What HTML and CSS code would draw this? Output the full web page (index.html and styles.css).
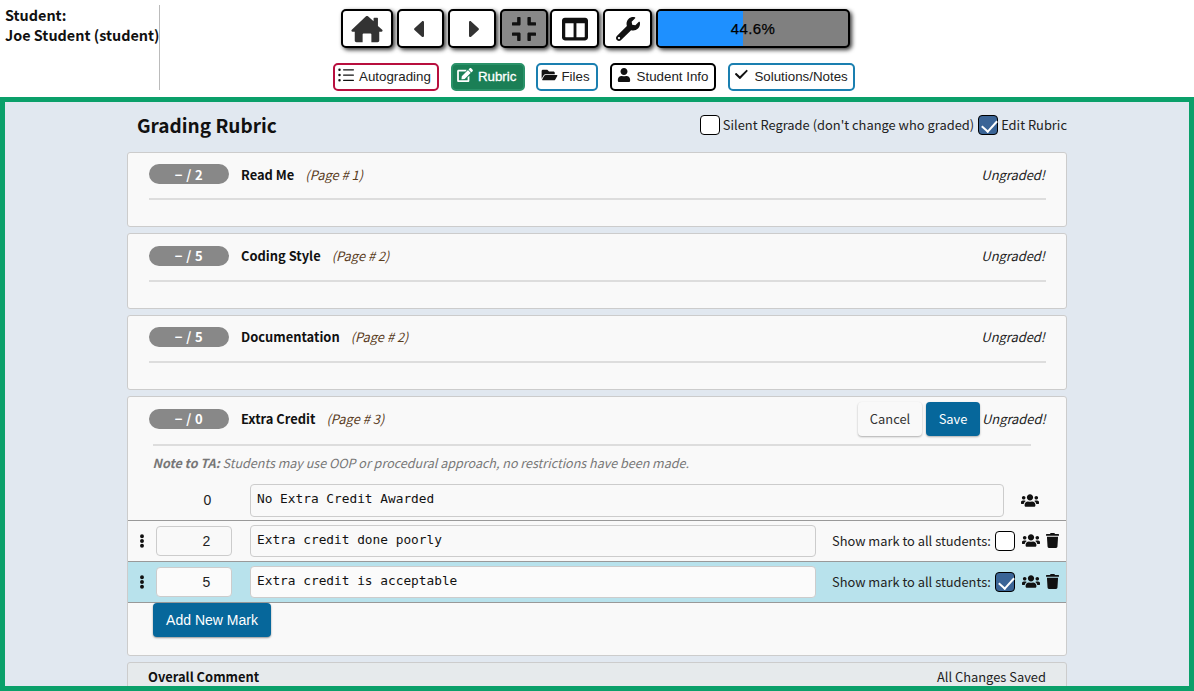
FILE: index.html
```html
<!DOCTYPE html>
<html>
	<head>
		<meta charset="utf-8">
		<title>Grading Rubric</title>
		<link rel="stylesheet" href="styles.css">
	</head>
	<body>
		<svg class="defs" width="0" height="0">
			<symbol id="i-home" viewBox="0 0 576 512"><path d="M288 16c7 0 13 3 18 7l102 90V64c0-7 5-12 12-12h56c7 0 12 5 12 12v138l78 68c14 12 5 34-13 34h-41v164c0 18-14 32-32 32H368V352c0-9-7-16-16-16H224c-9 0-16 7-16 16v148H96c-18 0-32-14-32-32V304H23c-18 0-27-22-13-34L270 23c5-4 11-7 18-7z"/></symbol>
			<symbol id="i-left" viewBox="0 0 160 256"><path d="M160 20v216c0 18-21 26-34 14L8 142c-10-8-10-20 0-28L126 6c13-12 34-4 34 14z"/></symbol>
			<symbol id="i-right" viewBox="0 0 160 256"><path d="M0 236V20C0 2 21-6 34 6l118 108c10 8 10 20 0 28L34 250c-13 12-34 4-34-14z"/></symbol>
			<symbol id="i-compress" viewBox="0 32 448 448"><path d="M436 192H312c-13.3 0-24-10.7-24-24V44c0-6.6 5.4-12 12-12h40c6.6 0 12 5.4 12 12v84h84c6.6 0 12 5.4 12 12v40c0 6.6-5.4 12-12 12zm-276-24V44c0-6.6-5.4-12-12-12h-40c-6.6 0-12 5.4-12 12v84H12c-6.6 0-12 5.4-12 12v40c0 6.6 5.4 12 12 12h124c13.3 0 24-10.7 24-24zm0 300V344c0-13.3-10.7-24-24-24H12c-6.6 0-12 5.4-12 12v40c0 6.6 5.4 12 12 12h84v84c0 6.6 5.4 12 12 12h40c6.6 0 12-5.4 12-12zm192 0v-84h84c6.6 0 12-5.4 12-12v-40c0-6.6-5.4-12-12-12H312c-13.3 0-24 10.7-24 24v124c0 6.6 5.4 12 12 12h40c6.6 0 12-5.4 12-12z"/></symbol>
			<symbol id="i-columns" viewBox="0 0 512 448"><path fill-rule="evenodd" d="M56 0h400c31 0 56 25 56 56v336c0 31-25 56-56 56H56c-31 0-56-25-56-56V56C0 25 25 0 56 0zM64 112v264c0 4 4 8 8 8h156V112zm220 0v272h156c4 0 8-4 8-8V112z"/></symbol>
			<symbol id="i-wrench" viewBox="0 0 512 512"><path d="M507.73 109.1c-2.24-9.03-13.54-12.09-20.12-5.51l-74.36 74.36-67.88-11.31-11.31-67.88 74.36-74.36c6.62-6.62 3.43-17.9-5.66-20.16-47.38-11.74-99.55.91-136.58 37.93-39.64 39.64-50.55 97.1-34.05 147.2L18.74 402.76c-24.99 24.99-24.99 65.51 0 90.5 24.99 24.99 65.51 24.99 90.5 0l213.21-213.21c50.12 16.71 107.47 5.68 147.37-34.22 37.07-37.07 49.7-89.32 37.91-136.73zM64 472c-13.25 0-24-10.75-24-24 0-13.26 10.75-24 24-24s24 10.74 24 24c0 13.25-10.75 24-24 24z"/></symbol>
			<symbol id="i-list" viewBox="0 0 512 448"><path d="M48 16a40 40 0 1 1 0 80 40 40 0 0 1 0-80zm0 168a40 40 0 1 1 0 80 40 40 0 0 1 0-80zm0 168a40 40 0 1 1 0 80 40 40 0 0 1 0-80zM176 36h320c9 0 16 7 16 16v8c0 9-7 16-16 16H176c-9 0-16-7-16-16v-8c0-9 7-16 16-16zm0 168h320c9 0 16 7 16 16v8c0 9-7 16-16 16H176c-9 0-16-7-16-16v-8c0-9 7-16 16-16zm0 168h320c9 0 16 7 16 16v8c0 9-7 16-16 16H176c-9 0-16-7-16-16v-8c0-9 7-16 16-16z"/></symbol>
			<symbol id="i-edit" viewBox="0 0 576 512"><path d="M402.6 83.2l90.2 90.2c3.8 3.8 3.8 10 0 13.8L274.4 405.6l-92.8 10.3c-12.4 1.4-22.9-9.1-21.5-21.5l10.3-92.8L388.8 83.2c3.8-3.8 10-3.8 13.8 0zm162-22.9l-48.8-48.8c-15.2-15.2-39.9-15.2-55.2 0l-35.4 35.4c-3.8 3.8-3.8 10 0 13.8l90.2 90.2c3.8 3.8 10 3.8 13.8 0l35.4-35.4c15.2-15.3 15.2-40 0-55.2zM384 346.2V448H64V128h229.8c3.2 0 6.2-1.3 8.5-3.5l40-40c7.6-7.6 2.2-20.5-8.5-20.5H48C21.5 64 0 85.5 0 112v352c0 26.5 21.5 48 48 48h352c26.5 0 48-21.5 48-48V306.2c0-10.7-12.9-16-20.5-8.5l-40 40c-2.2 2.3-3.5 5.3-3.5 8.5z"/></symbol>
			<symbol id="i-folder" viewBox="0 0 576 512"><path d="M572.694 292.093L500.27 416.248A63.997 63.997 0 0 1 444.989 448H45.025c-18.523 0-30.064-20.093-20.731-36.093l72.424-124.155A64 64 0 0 1 152 256h399.964c18.523 0 30.064 20.093 20.73 36.093zM152 224h328v-48c0-26.51-21.49-48-48-48H272l-64-64H48C21.49 64 0 85.49 0 112v278.046l69.077-118.418C86.214 242.25 117.989 224 152 224z"/></symbol>
			<symbol id="i-user" viewBox="0 0 448 512"><path d="M224 256c70.7 0 128-57.3 128-128S294.7 0 224 0 96 57.3 96 128s57.3 128 128 128zm89.6 32h-16.7c-22.2 10.2-46.9 16-72.9 16s-50.6-5.8-72.9-16h-16.7C60.2 288 0 348.2 0 422.4V464c0 26.5 21.5 48 48 48h352c26.5 0 48-21.5 48-48v-41.6c0-74.2-60.2-134.4-134.4-134.4z"/></symbol>
			<symbol id="i-check" viewBox="0 0 512 512"><path d="M186 400L20 234c-6-6-6-16 0-22l24-24c6-6 16-6 22-6s10 2 14 6l117 117L432 70c6-6 16-6 22 0l24 24c6 6 6 16 0 22L208 400c-6 6-16 6-22 0z"/></symbol>
			<symbol id="i-users" viewBox="0 0 640 512"><path d="M96 224c35.3 0 64-28.7 64-64s-28.7-64-64-64-64 28.7-64 64 28.7 64 64 64zm448 0c35.3 0 64-28.7 64-64s-28.7-64-64-64-64 28.7-64 64 28.7 64 64 64zm32 32h-64c-17.6 0-33.5 7.1-45.1 18.6 40.3 22.1 68.9 62 75.1 109.4h66c17.7 0 32-14.3 32-32v-32c0-35.3-28.7-64-64-64zm-256 0c61.9 0 112-50.1 112-112S381.9 32 320 32 208 82.1 208 144s50.1 112 112 112zm76.8 32h-8.3c-20.8 10-43.9 16-68.5 16s-47.6-6-68.5-16h-8.3C179.6 288 128 339.6 128 403.2V432c0 26.5 21.5 48 48 48h288c26.5 0 48-21.5 48-48v-28.8c0-63.6-51.6-115.2-115.2-115.2zm-223.7-13.4C161.5 263.1 145.6 256 128 256H64c-35.3 0-64 28.7-64 64v32c0 17.7 14.3 32 32 32h65.9c6.3-47.4 34.9-87.3 75.2-109.4z"/></symbol>
			<symbol id="i-trash" viewBox="0 0 448 512"><path d="M432 32H312l-9.4-18.7A24 24 0 0 0 281.1 0H166.8a23.72 23.72 0 0 0-21.4 13.3L136 32H16A16 16 0 0 0 0 48v32a16 16 0 0 0 16 16h416a16 16 0 0 0 16-16V48a16 16 0 0 0-16-16zM53.2 467a48 48 0 0 0 47.9 45h245.8a48 48 0 0 0 47.9-45L416 128H32z"/></symbol>
			<symbol id="i-dots" viewBox="0 0 192 512"><path d="M96 184a72 72 0 1 1 0 144 72 72 0 0 1 0-144zM24 80a72 72 0 1 0 144 0 72 72 0 0 0-144 0zm0 352a72 72 0 1 0 144 0 72 72 0 0 0-144 0z"/></symbol>
		</svg>

		<div class="top">
			<div class="student">Student:<br>Joe Student (student)</div>
			<div class="nav">
				<div class="nav-btns">
					<a class="btn w-home"><svg class="ico-home"><use href="#i-home"/></svg></a>
					<a class="btn w-arrow"><svg class="ico-arrow ico-back"><use href="#i-left"/></svg></a>
					<a class="btn w-arrow"><svg class="ico-arrow ico-next"><use href="#i-right"/></svg></a>
					<a class="btn w-mid active"><svg class="ico-mid"><use href="#i-compress"/></svg></a>
					<a class="btn w-mid"><svg class="ico-mid"><use href="#i-columns"/></svg></a>
					<a class="btn w-mid"><svg class="ico-mid"><use href="#i-wrench"/></svg></a>
					<div class="progress">
						<div class="progress-fill" style="width:44.6%"></div>
						<span>44.6%</span>
					</div>
				</div>
				<div class="nav-tabs">
					<a class="tab tab-red"><svg class="tab-ico"><use href="#i-list"/></svg>Autograding</a>
					<a class="tab tab-green"><svg class="tab-ico"><use href="#i-edit"/></svg>Rubric</a>
					<a class="tab tab-blue tab-files"><svg class="tab-ico"><use href="#i-folder"/></svg>Files</a>
					<a class="tab tab-black"><svg class="tab-ico"><use href="#i-user"/></svg>Student Info</a>
					<a class="tab tab-blue tab-notes"><svg class="tab-ico"><use href="#i-check"/></svg>Solutions/Notes</a>
				</div>
			</div>
		</div>

		<div class="panel">
			<div class="rubric">
				<div class="rubric-head">
					<h2>Grading Rubric</h2>
					<div class="rubric-opts">
						<label><input type="checkbox">Silent Regrade (don't change who graded)</label>
						<label><input type="checkbox" checked>Edit Rubric</label>
					</div>
				</div>

				<div class="card">
					<div class="card-head">
						<span class="pill">− / 2</span>
						<span class="c-title">Read Me</span>
						<span class="c-page">(Page # 1)</span>
						<span class="c-status">Ungraded!</span>
					</div>
					<hr>
				</div>
				<div class="card">
					<div class="card-head">
						<span class="pill">− / 5</span>
						<span class="c-title">Coding Style</span>
						<span class="c-page">(Page # 2)</span>
						<span class="c-status">Ungraded!</span>
					</div>
					<hr>
				</div>
				<div class="card">
					<div class="card-head">
						<span class="pill">− / 5</span>
						<span class="c-title">Documentation</span>
						<span class="c-page">(Page # 2)</span>
						<span class="c-status">Ungraded!</span>
					</div>
					<hr>
				</div>

				<div class="card card-open">
					<div class="card-head">
						<span class="pill">− / 0</span>
						<span class="c-title">Extra Credit</span>
						<span class="c-page">(Page # 3)</span>
						<span class="c-actions">
							<button class="b-cancel">Cancel</button>
							<button class="b-save">Save</button>
						</span>
						<span class="c-status">Ungraded!</span>
					</div>
					<hr class="hr-open">
					<p class="note"><b>Note to TA:</b> Students may use OOP or procedural approach, no restrictions have been made.</p>

					<div class="mark mark-first">
						<span class="m-grip"></span>
						<div class="m-points m-plain">0</div>
						<textarea class="m-text m-wide" readonly>No Extra Credit Awarded</textarea>
						<svg class="m-users"><use href="#i-users"/></svg>
					</div>
					<div class="mark">
						<svg class="m-grip"><use href="#i-dots"/></svg>
						<div class="m-points">2</div>
						<textarea class="m-text" readonly>Extra credit done poorly</textarea>
						<label class="m-show">Show mark to all students:<input type="checkbox"></label>
						<svg class="m-users"><use href="#i-users"/></svg>
						<svg class="m-trash"><use href="#i-trash"/></svg>
					</div>
					<div class="mark mark-on">
						<svg class="m-grip"><use href="#i-dots"/></svg>
						<div class="m-points">5</div>
						<textarea class="m-text" readonly>Extra credit is acceptable</textarea>
						<label class="m-show">Show mark to all students:<input type="checkbox" checked></label>
						<svg class="m-users"><use href="#i-users"/></svg>
						<svg class="m-trash"><use href="#i-trash"/></svg>
					</div>
					<button class="b-add">Add New Mark</button>
				</div>

				<div class="card card-overall">
					<b>Overall Comment</b>
					<span>All Changes Saved</span>
				</div>
			</div>
		</div>
	</body>
</html>
```

FILE: styles.css
```css
*{margin: 0;padding: 0;box-sizing: border-box;}
html,body{height: 100%;overflow: hidden;}
body{
	background: #fff;
	color: #000;
	font-family: "Noto Sans CJK SC","Noto Sans",sans-serif;
	font-size: 12.9px;
	display: flex;
	flex-direction: column;
}
.defs{position: absolute;}
svg{fill: currentColor;display: block;}

/* top bar */
.top{
	height: 97px;
	flex: none;
	display: flex;
}
.student{
	width: 160px;
	height: 85px;
	margin-top: 5px;
	padding-left: 5px;
	border-right: 1px solid #bbb;
	font-weight: 700;
	font-size: 14.4px;
	line-height: 20px;
	white-space: nowrap;
	color: #111;
}
.nav{margin-left: 173px;}
.nav-btns{
	display: flex;
	gap: 4px;
	height: 39px;
	margin: 9px 0 0 8px;
}
.btn{
	height: 39px;
	border: 2px solid #000;
	border-radius: 5px;
	background: #fff;
	box-shadow: 2px 2px 4px rgba(0,0,0,0.8);
	color: #333;
	display: flex;
	align-items: center;
	justify-content: center;
}
.btn.active{background: #888;color: #222;}
.w-home{width: 52px;}
.w-arrow{width: 48px;}
.w-arrow:nth-child(2){width: 47px;}
.w-mid{width: 48px;}
.w-mid:nth-child(5),.w-mid:nth-child(6){width: 49px;}
.w-mid:nth-child(5){margin-left: -2px;}
.ico-home{width: 32px;height: 28px;}
.ico-arrow{width: 10px;height: 16px;}
.ico-back{margin-left: -3px;}
.ico-next{margin-left: 3px;}
.ico-mid{width: 26px;height: 24px;color: #111;}
.progress{
	width: 194px;
	height: 39px;
	position: relative;
	border: 2px solid #000;
	border-radius: 5px;
	background: #808080;
	box-shadow: 2px 2px 4px rgba(0,0,0,0.8);
	overflow: hidden;
	display: flex;
	align-items: center;
	justify-content: center;
	font: 15px "Liberation Sans",sans-serif;
	letter-spacing: 0.4px;
	-webkit-text-stroke: 0.25px #000;
}
.progress-fill{
	position: absolute;
	left: 0;top: 0;bottom: 0;
	background: #1e90ff;
}
.progress span{position: relative;}
.nav-tabs{
	display: flex;
	gap: 12px;
	margin-top: 15px;
}
.tab{
	height: 28px;
	padding: 0 6px 2px 3px;
	border: 2px solid;
	border-radius: 5px;
	background: #fff;
	color: #222;
	font: 13.33px "Liberation Sans",sans-serif;
	display: flex;
	align-items: center;
	white-space: nowrap;
}
.tab-ico{width: 16px;height: 14px;margin-right: 5px;color: #111;margin-top: -2px;}
.tab-red{border-color: #b80f3e;}
.tab-green{
	background: #1b7f56;
	border-color: #2a9269;
	color: #fff;
	margin-right: -1px;
	padding-left: 4px;
	padding-right: 7px;
	-webkit-text-stroke: 0.3px #fff;
}
.tab-green .tab-ico{color: #fff;}
.tab-blue{border-color: #1a7fb0;}
.tab-black{border-color: #000;padding-left: 4px;}
.tab-files .tab-ico{width: 17px;margin-right: 3px;}
.tab-notes{padding-left: 4px;padding-right: 5px;}
.tab-notes .tab-ico{margin-right: 5px;width: 15px;}

/* main panel */
.panel{
	flex: 1;
	min-height: 0;
	border: 5px solid #0aa06a;
	background: #e1e8f0;
	overflow: hidden;
}
.rubric{width: 940px;margin-left: 122px;}
.rubric-head{
	height: 50px;
	display: flex;
	align-items: center;
	justify-content: space-between;
	padding-left: 10px;
}
.rubric-head h2{font-size: 19px;font-weight: 700;color: #111;margin-top: -6px;}
.rubric-opts{display: flex;gap: 4px;margin-top: -5px;color: #222;}
.rubric-opts label{display: flex;align-items: center;gap: 3px;}
input[type=checkbox]{
	appearance: none;
	width: 20px;height: 20px;
	border: 1px solid #000;
	border-radius: 4px;
	background: #fff;
	flex: none;
}
input[type=checkbox]:checked{
	background: #3a6496;
	position: relative;
}
input[type=checkbox]:checked::after{
	content: "";
	position: absolute;
	left: 6px;top: 1px;
	width: 7px;height: 13px;
	border: solid #fff;
	border-width: 0 2.5px 2.5px 0;
	transform: rotate(42deg);
}

/* cards */
.card{
	height: 75.33px;
	margin-bottom: 6px;
	background: #f9f9f9;
	border: 1px solid #ccc;
	border-radius: 3px;
	padding: 10.3px 21px 0 21px;
}
.card-head{display: flex;align-items: center;height: 22px;}
.pill{
	width: 80px;height: 20px;
	border-radius: 10px;
	background: #888;
	color: #fff;
	font-weight: 700;
	font-size: 13px;
	letter-spacing: 0.4px;
	display: flex;
	align-items: center;
	justify-content: center;
	margin-right: 12px;
	white-space: pre;
}
.c-title{font-weight: 700;margin-right: 11px;color: #111;}
.c-page{font-style: italic;color: #5a3d1e;}
.c-status{margin-left: auto;font-style: italic;color: #222;}
.card hr{
	border: 0;
	height: 2px;
	background: #ddd;
	margin: 13px -1px 0 0;
}
.card-open{height: 260px;padding: 5px 0 0 0;}
.card-open .card-head{height: 34px;padding: 0 21px;}
.card-open .c-status{margin-left: 2px;width: 63px;flex: none;}
.c-actions{margin-left: auto;display: flex;gap: 4px;}
.c-actions button{
	height: 34px;
	border: 0;
	border-radius: 4px;
	font: 12.9px "Noto Sans CJK SC","Noto Sans",sans-serif;
	box-shadow: 0 1px 2px rgba(0,0,0,0.3);
}
.b-cancel{width: 64px;background: #f9f9f9;color: #333;}
.b-save{width: 54px;background: #06679b;color: #fff;}
.card hr.hr-open{margin: 8px 35px 0 25px;}
.note{
	margin: 7px 0 0 24.5px;
	font-size: 12.55px;
	line-height: 20px;
	font-style: italic;
	color: #777;
}
.mark{
	height: 41px;
	display: flex;
	align-items: center;
	border-bottom: 1px solid #999;
}
.mark-first{height: 48px;padding-top: 8px;}
.mark-on{background: #b8e2ec;}
.m-grip{width: 6px;height: 14px;margin: 0 11px 0 11px;color: #111;flex: none;}
.m-points{
	width: 76px;height: 30px;
	margin-right: 18px;
	border: 1px solid #ccc;
	border-radius: 4px;
	background: #f9f9f9;
	font: 14px "Liberation Sans",sans-serif;
	color: #222;
	text-align: center;
	line-height: 29px;
	padding-left: 25px;
	flex: none;
}
.mark-on .m-points,.mark-on .m-text{background: #fbfbfb;}
.m-plain{border-color: transparent;background: none;padding-left: 27px;}
.m-text{
	width: 566px;height: 32px;
	padding: 5px 6px;
	border: 1px solid #ccc;
	border-radius: 4px;
	background: #f9f9f9;
	font: 12.8px/18px "DejaVu Sans Mono",monospace;
	color: #111;
	resize: none;
	overflow: hidden;
	outline: 0;
	flex: none;
}
.m-wide{width: 754px;height: 33px;}
.m-show{
	display: flex;
	align-items: center;
	gap: 4px;
	margin-left: 16px;
	width: 183px;
	justify-content: space-between;
	font-size: 12.85px;
	color: #222;
	white-space: nowrap;
	flex: none;
}
.m-users{width: 18px;height: 15px;margin-left: 7px;color: #111;flex: none;}
.mark-first .m-users{margin-left: 17px;}
.m-trash{width: 13px;height: 15px;margin-left: 6px;color: #111;flex: none;}
.b-add{
	display: block;
	width: 118px;height: 34px;
	margin: 0 0 0 25px;
	border: 0;
	border-radius: 4px;
	background: #06679b;
	color: #fff;
	font: 14px "Liberation Sans",sans-serif;
	box-shadow: 0 1px 2px rgba(0,0,0,0.4);
}
.card-overall{
	height: 60px;
	background: #e6eaec;
	display: flex;
	justify-content: space-between;
	align-items: flex-start;
	padding: 4px 20px 0 20px;
	color: #222;
}
.card-overall b{font-weight: 700;color: #111;}
```
